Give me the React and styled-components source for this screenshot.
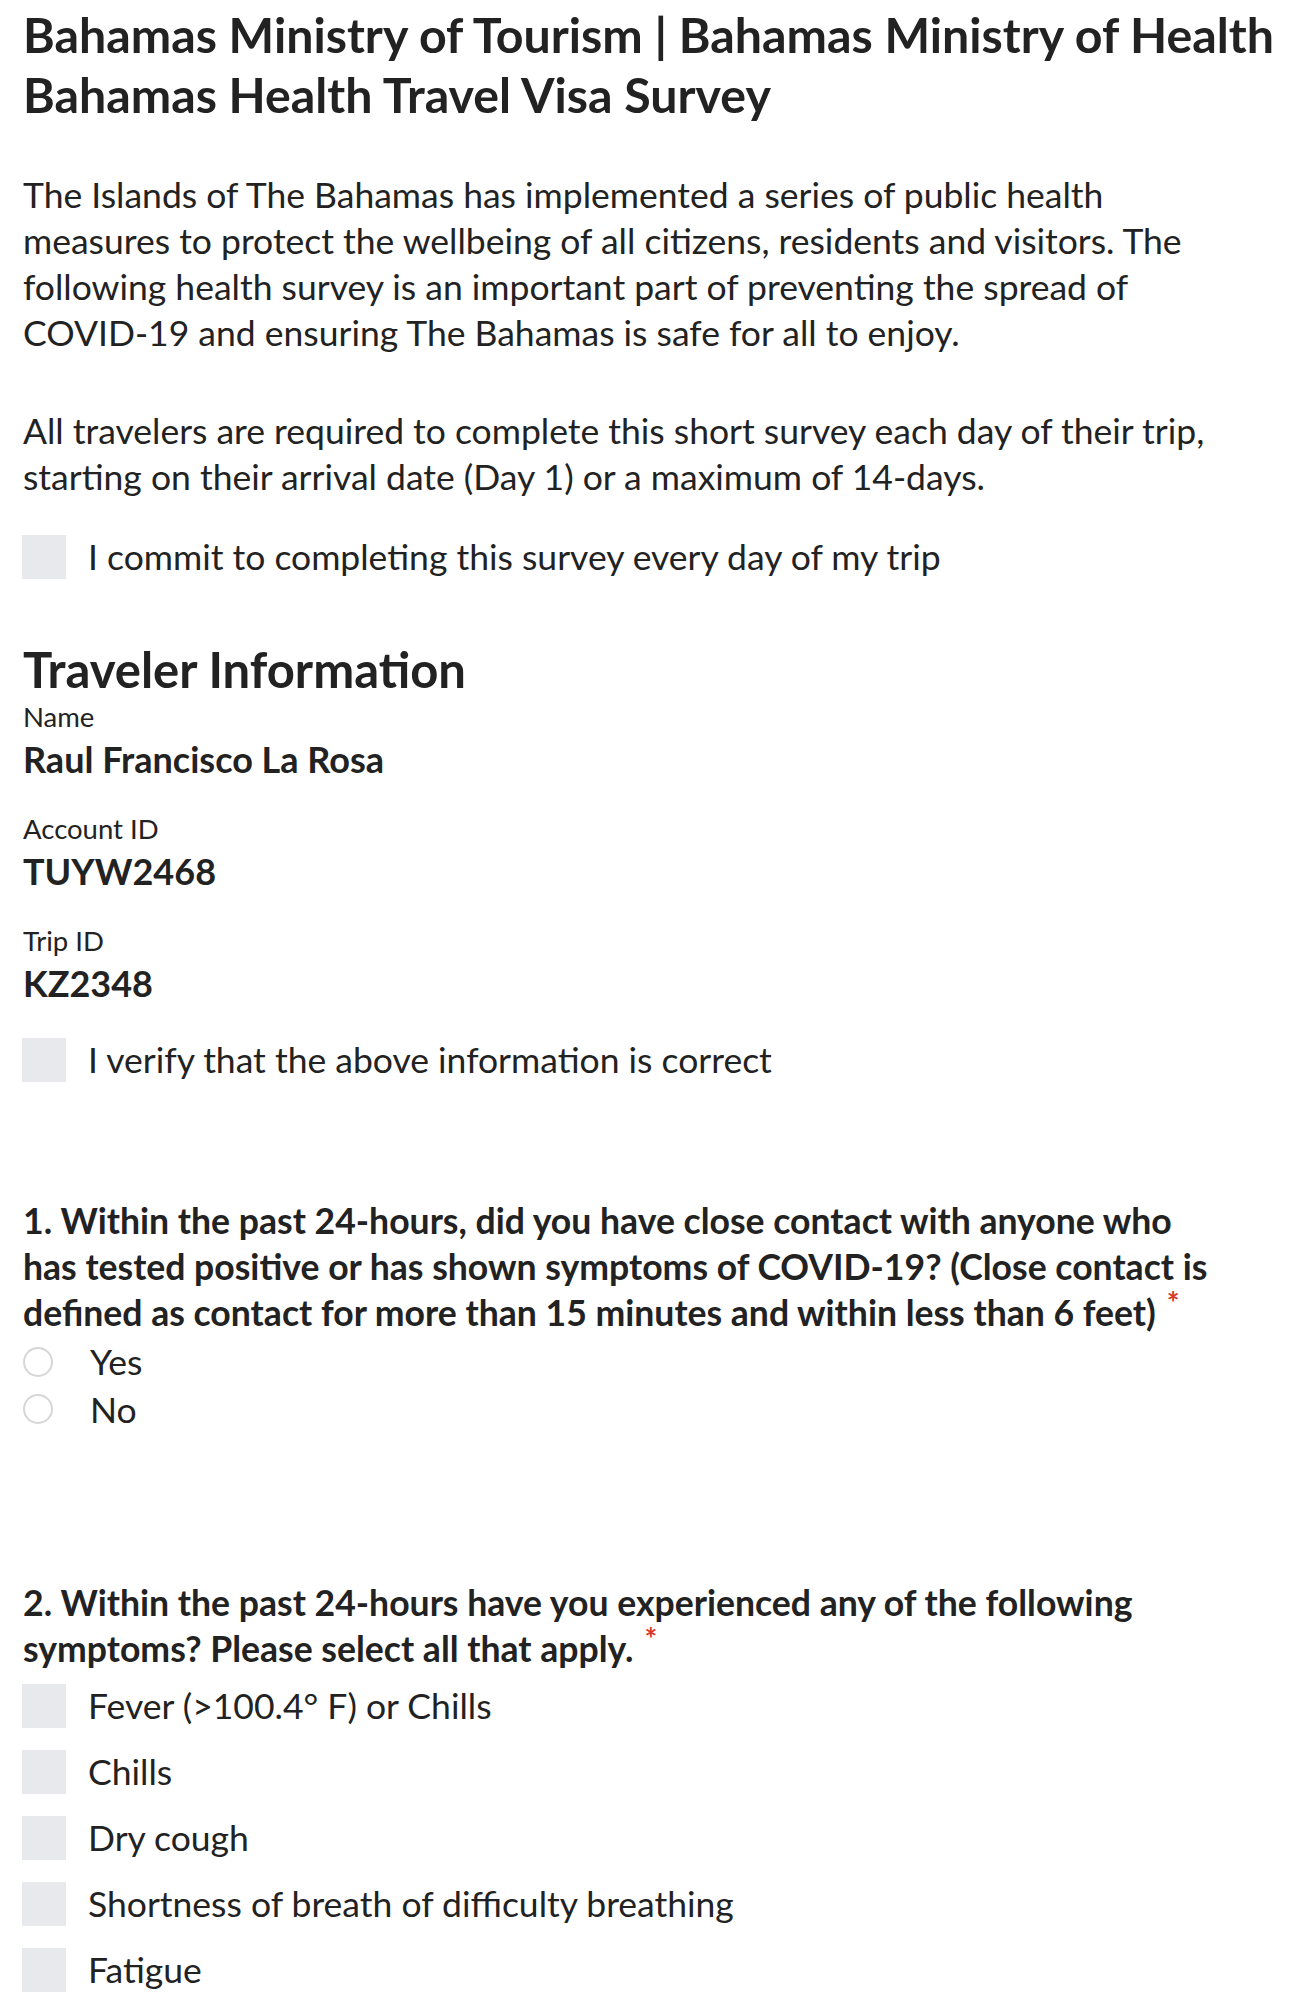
import React from "react";
import styled, { createGlobalStyle } from "styled-components";

const Global = createGlobalStyle`
  html, body { margin: 0; padding: 0; background: #ffffff; }
  body { font-family: Lato, "Open Sans", sans-serif; color: #222222; }
  * { box-sizing: border-box; }
`;

const Page = styled.main`
  width: 1290px;
  padding: 4px 8px 0 23px;
  display: flex;
  flex-direction: column;
`;

const Title = styled.h1`
  margin: 0;
  font-size: 48.3px;
  line-height: 60px;
  font-weight: 700;
  white-space: nowrap;
`;

const Paragraph = styled.p`
  margin: ${(p) => p.$mt || 0}px 0 0 0;
  font-size: 35.5px;
  line-height: 46px;
  font-weight: 400;
  white-space: nowrap;
`;

const CheckRow = styled.label`
  display: flex;
  align-items: center;
  gap: 22px;
  margin-top: ${(p) => p.$mt || 0}px;
  font-size: 35.5px;
  line-height: 44px;
  font-weight: 400;
  white-space: nowrap;
`;

const Box = styled.span`
  flex: none;
  width: 44px;
  height: 44px;
  background: #e8e9ec;
  margin-left: -1px;
`;

const SectionTitle = styled.h2`
  margin: ${(p) => p.$mt || 0}px 0 0 0;
  font-size: 49px;
  line-height: 58px;
  font-weight: 700;
`;

const Field = styled.div`
  display: flex;
  flex-direction: column;
  gap: 4px;
  margin-top: ${(p) => p.$mt || 0}px;
`;

const FieldLabel = styled.span`
  font-size: 27.5px;
  line-height: 30px;
  font-weight: 400;
`;

const FieldValue = styled.span`
  font-size: 36px;
  line-height: 46px;
  font-weight: 700;
`;

const Question = styled.h3`
  margin: ${(p) => p.$mt || 0}px 0 0 0;
  font-size: 35.6px;
  line-height: 46px;
  font-weight: 700;
  white-space: nowrap;
`;

const Required = styled.span`
  color: #d9372b;
  font-size: 30px;
  font-weight: 700;
  margin-left: 11px;
  line-height: 0;
  vertical-align: 12px;
`;

const RadioList = styled.div`
  display: flex;
  flex-direction: column;
  margin-top: 2px;
`;

const RadioRow = styled.label`
  display: flex;
  align-items: center;
  gap: 37px;
  height: 47.5px;
  font-size: 35.5px;
  font-weight: 400;
`;

const Circle = styled.span`
  flex: none;
  width: 30px;
  height: 30px;
  border-radius: 50%;
  border: 2px solid #d6d6d6;
  background: #ffffff;
`;

const CheckList = styled.div`
  display: flex;
  flex-direction: column;
  gap: 22px;
  margin-top: 12px;
`;

const symptoms = [
  "Fever (>100.4° F) or Chills",
  "Chills",
  "Dry cough",
  "Shortness of breath of difficulty breathing",
  "Fatigue",
];

export default function App() {
  return (
    <>
      <Global />
      <Page>
        <Title>
          Bahamas Ministry of Tourism | Bahamas Ministry of Health
          <br />
          Bahamas Health Travel Visa Survey
        </Title>
        <Paragraph $mt={48}>
          The Islands of The Bahamas has implemented a series of public health
          <br />
          measures to protect the wellbeing of all citizens, residents and visitors. The
          <br />
          following health survey is an important part of preventing the spread of
          <br />
          COVID-19 and ensuring The Bahamas is safe for all to enjoy.
        </Paragraph>
        <Paragraph $mt={52}>
          All travelers are required to complete this short survey each day of their trip,
          <br />
          starting on their arrival date (Day 1) or a maximum of 14-days.
        </Paragraph>
        <CheckRow $mt={35}>
          <Box />
          I commit to completing this survey every day of my trip
        </CheckRow>

        <SectionTitle $mt={61}>Traveler Information</SectionTitle>
        <Field $mt={4}>
          <FieldLabel>Name</FieldLabel>
          <FieldValue>Raul Francisco La Rosa</FieldValue>
        </Field>
        <Field $mt={32}>
          <FieldLabel>Account ID</FieldLabel>
          <FieldValue>TUYW2468</FieldValue>
        </Field>
        <Field $mt={32}>
          <FieldLabel>Trip ID</FieldLabel>
          <FieldValue>KZ2348</FieldValue>
        </Field>
        <CheckRow $mt={32}>
          <Box />
          I verify that the above information is correct
        </CheckRow>

        <Question $mt={116}>
          1. Within the past 24-hours, did you have close contact with anyone who
          <br />
          has tested positive or has shown symptoms of COVID-19? (Close contact is
          <br />
          defined as contact for more than 15 minutes and within less than 6 feet)
          <Required>*</Required>
        </Question>
        <RadioList>
          <RadioRow>
            <Circle />
            Yes
          </RadioRow>
          <RadioRow>
            <Circle />
            No
          </RadioRow>
        </RadioList>

        <Question $mt={147}>
          2. Within the past 24-hours have you experienced any of the following
          <br />
          symptoms? Please select all that apply.
          <Required>*</Required>
        </Question>
        <CheckList>
          {symptoms.map((s) => (
            <CheckRow key={s}>
              <Box />
              {s}
            </CheckRow>
          ))}
        </CheckList>
      </Page>
    </>
  );
}
